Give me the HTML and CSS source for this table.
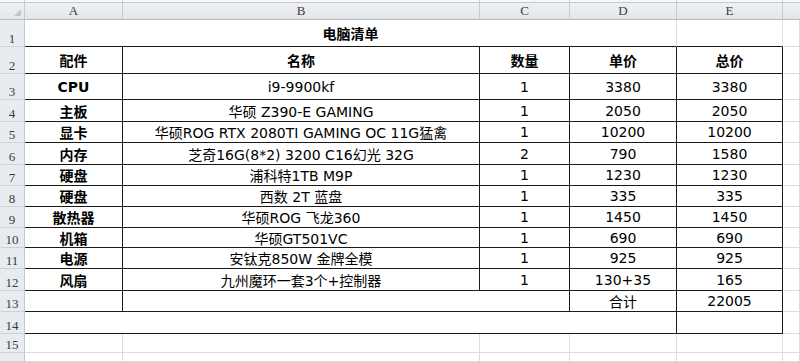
FILE: index.html
```html
<!DOCTYPE html>
<html lang="zh">
<head>
<meta charset="utf-8">
<title>电脑清单</title>
<link rel="stylesheet" href="styles.css">
</head>
<body>
<div class="sheet">
  <!-- column headers -->
  <div class="hd corner"><svg class="tri" width="7" height="7" viewBox="0 0 7 7"><polygon points="7,0 7,7 0,7" fill="#c3c8ce"/></svg></div>
  <div class="hd">A</div>
  <div class="hd">B</div>
  <div class="hd">C</div>
  <div class="hd">D</div>
  <div class="hd">E</div>
  <div class="hd last"></div>

  <!-- row 1 -->
  <div class="rn">1</div>
  <div class="c bb bold span4">电脑清单</div>
  <div class="c bb"></div>
  <div class="c"></div>

  <!-- row 2 -->
  <div class="rn">2</div>
  <div class="c b bold">配件</div>
  <div class="c b bold">名称</div>
  <div class="c b bold">数量</div>
  <div class="c b bold">单价</div>
  <div class="c b bold">总价</div>
  <div class="c"></div>

  <div class="rn">3</div>
  <div class="c b bold">CPU</div>
  <div class="c b">i9-9900kf</div>
  <div class="c b">1</div>
  <div class="c b">3380</div>
  <div class="c b">3380</div>
  <div class="c"></div>

  <div class="rn">4</div>
  <div class="c b bold">主板</div>
  <div class="c b">华硕 Z390-E GAMING</div>
  <div class="c b">1</div>
  <div class="c b">2050</div>
  <div class="c b">2050</div>
  <div class="c"></div>

  <div class="rn">5</div>
  <div class="c b bold">显卡</div>
  <div class="c b">华硕ROG RTX 2080TI GAMING OC 11G猛禽</div>
  <div class="c b">1</div>
  <div class="c b">10200</div>
  <div class="c b">10200</div>
  <div class="c"></div>

  <div class="rn">6</div>
  <div class="c b bold">内存</div>
  <div class="c b">芝奇16G(8*2) 3200 C16幻光 32G</div>
  <div class="c b">2</div>
  <div class="c b">790</div>
  <div class="c b">1580</div>
  <div class="c"></div>

  <div class="rn">7</div>
  <div class="c b bold">硬盘</div>
  <div class="c b">浦科特1TB M9P</div>
  <div class="c b">1</div>
  <div class="c b">1230</div>
  <div class="c b">1230</div>
  <div class="c"></div>

  <div class="rn">8</div>
  <div class="c b bold">硬盘</div>
  <div class="c b">西数 2T 蓝盘</div>
  <div class="c b">1</div>
  <div class="c b">335</div>
  <div class="c b">335</div>
  <div class="c"></div>

  <div class="rn">9</div>
  <div class="c b bold">散热器</div>
  <div class="c b">华硕ROG 飞龙360</div>
  <div class="c b">1</div>
  <div class="c b">1450</div>
  <div class="c b">1450</div>
  <div class="c"></div>

  <div class="rn">10</div>
  <div class="c b bold">机箱</div>
  <div class="c b">华硕GT501VC</div>
  <div class="c b">1</div>
  <div class="c b">690</div>
  <div class="c b">690</div>
  <div class="c"></div>

  <div class="rn">11</div>
  <div class="c b bold">电源</div>
  <div class="c b">安钛克850W 金牌全模</div>
  <div class="c b">1</div>
  <div class="c b">925</div>
  <div class="c b">925</div>
  <div class="c"></div>

  <div class="rn">12</div>
  <div class="c b bold">风扇</div>
  <div class="c b">九州魔环一套3个+控制器</div>
  <div class="c b">1</div>
  <div class="c b">130+35</div>
  <div class="c b">165</div>
  <div class="c"></div>

  <div class="rn">13</div>
  <div class="c b"></div>
  <div class="c b span2"></div>
  <div class="c b">合计</div>
  <div class="c b">22005</div>
  <div class="c"></div>

  <div class="rn">14</div>
  <div class="c b span4"></div>
  <div class="c b"></div>
  <div class="c"></div>

  <div class="rn">15</div>
  <div class="c"></div>
  <div class="c"></div>
  <div class="c"></div>
  <div class="c"></div>
  <div class="c"></div>
  <div class="c"></div>

  <div class="rn"></div>
  <div class="c"></div>
  <div class="c"></div>
  <div class="c"></div>
  <div class="c"></div>
  <div class="c"></div>
  <div class="c"></div>
</div>
</body>
</html>
```

FILE: styles.css
```css
html, body {
  margin: 0;
  padding: 0;
  background: #ffffff;
}

.sheet {
  display: grid;
  grid-template-columns: 25px 98px 357px 90px 107px 106px 17px;
  grid-template-rows: 20px 27px 27px 26px 22px 21px 22px 21px 21px 21px 20px 21px 22px 21px 22px 19px 9px;
  width: 800px;
  height: 362px;
  overflow: hidden;
  font-family: "DejaVu Sans", "Noto Sans CJK SC", sans-serif;
  font-size: 14px;
  color: #000;
}

.hd {
  box-sizing: border-box;
  display: flex;
  align-items: center;
  justify-content: center;
  padding-top: 3px;
  background: linear-gradient(#f6f7f9 0, #f6f7f9 2px, #c4c9d0 2px, #c4c9d0 3px, #eef0f3 3px, #e2e6eb 100%);
  border-right: 1px solid #c6cbd2;
  border-bottom: 1px solid #b4bac2;
  font-family: "Liberation Serif", "DejaVu Serif", serif;
  font-size: 13px;
  color: #3c3c3c;
}

.hd.last {
  border-right: none;
}

.corner {
  justify-content: flex-end;
  align-items: flex-end;
  padding: 0 3px 3px 0;
}

.tri {
  display: block;
}

.rn {
  box-sizing: border-box;
  display: flex;
  align-items: flex-end;
  justify-content: center;
  padding-bottom: 1px;
  background: #e8ebef;
  border-right: 1px solid #c3c8cf;
  border-bottom: 1px solid #cdd2d8;
  font-family: "Liberation Serif", "DejaVu Serif", serif;
  font-size: 13px;
  line-height: 13px;
  color: #3c3c3c;
}

.c {
  box-sizing: border-box;
  display: flex;
  align-items: center;
  justify-content: center;
  white-space: nowrap;
  overflow: hidden;
  border-right: 1px solid #dcdcdc;
  border-bottom: 1px solid #dcdcdc;
}

.b {
  border-right-color: #1a1a1a;
  border-bottom-color: #1a1a1a;
}

.bb {
  border-bottom-color: #1a1a1a;
}

.bold {
  font-weight: bold;
}

.span2 {
  grid-column: span 2;
}

.span4 {
  grid-column: span 4;
}
```
